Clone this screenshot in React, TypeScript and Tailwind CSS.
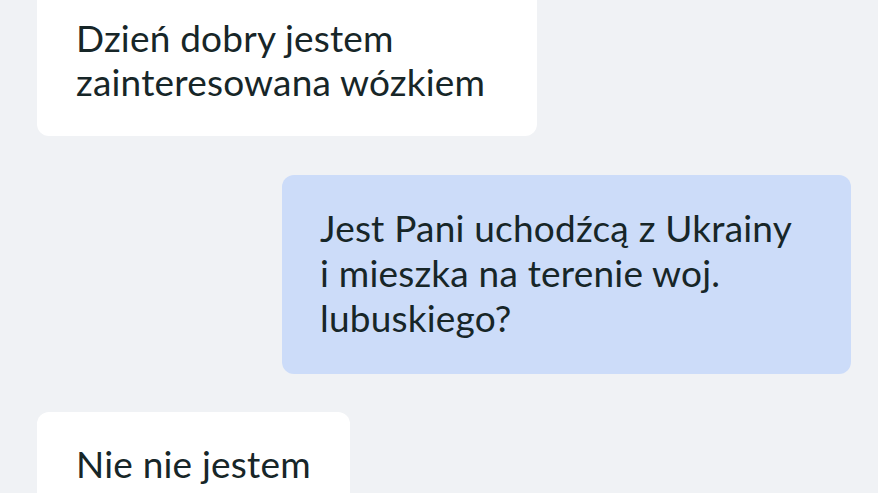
export default function App() {
  return (
    <div
      className="w-[878px] h-[493px] overflow-hidden bg-[#f0f2f5] pl-[37px] pr-[27px]"
      style={{ fontFamily: 'Lato, "Noto Sans", sans-serif' }}
    >
      <div className="flex flex-col gap-[39px] text-[37px] leading-[44px] tracking-[0.2px] text-[#172628]">
        {/* incoming */}
        <div className="self-start w-[500px] -mt-[20px] bg-white rounded-[12px] pl-[39px] pr-[30px] pt-[36px] pb-[32px]">
          Dzień dobry jestem
          <br />
          zainteresowana wózkiem
        </div>

        {/* outgoing */}
        <div className="self-end w-[569px] bg-[#ccdcf9] rounded-[12px] pl-[38px] pr-[30px] pt-[30px] pb-[34px] leading-[45px]">
          Jest Pani uchodźcą z Ukrainy
          <br />
          i mieszka na terenie woj.
          <br />
          lubuskiego?
        </div>

        {/* incoming */}
        <div className="self-start w-[313px] bg-white rounded-[12px] pl-[39px] pr-[30px] pt-[30px] pb-[30px] -mt-[1px]">
          Nie nie jestem
        </div>
      </div>
    </div>
  );
}
